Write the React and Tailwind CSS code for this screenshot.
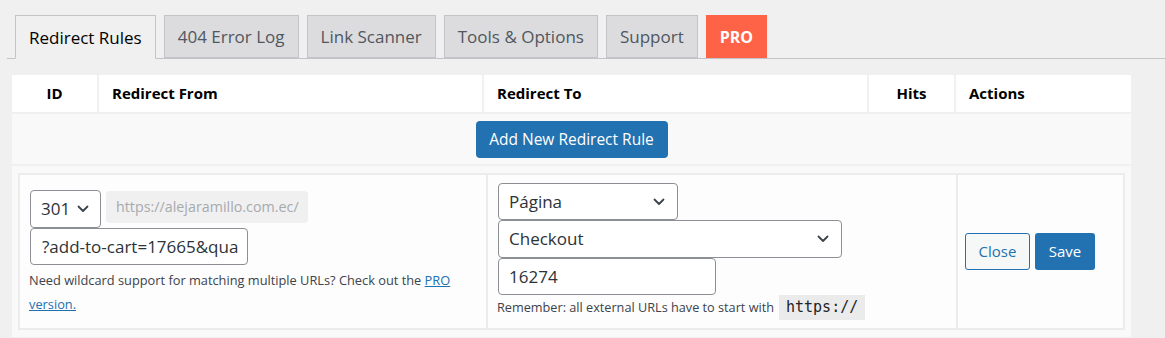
import React from "react";

const Chevron = ({ className = "" }) => (
  <svg className={className} width="12" height="8" viewBox="0 0 12 8" fill="none">
    <path d="M1.5 1.5 L6 6 L10.5 1.5" stroke="#3c434a" strokeWidth="1.8" strokeLinecap="round" strokeLinejoin="round" />
  </svg>
);

const tabBase = "h-[43px] px-[13px] flex items-center border border-[#c3c4c7] text-[17px] leading-none";

export default function App() {
  return (
    <div className="w-[1165px] h-[338px] bg-[#f0f0f1] overflow-hidden text-[#1d2327]" style={{ fontFamily: '"Open Sans", "Noto Sans", sans-serif' }}>
      {/* Tabs */}
      <div className="pt-[15px] ml-[7px] pl-[8px] border-b border-[#c3c4c7] flex gap-[8px] h-[59px]">
        <div className={`${tabBase} bg-[#f0f0f1] border-b-[#f0f0f1] text-[#000] h-[44px]`}>Redirect Rules</div>
        <div className={`${tabBase} bg-[#dcdcde] text-[#50575e]`}>404 Error Log</div>
        <div className={`${tabBase} bg-[#dcdcde] text-[#50575e]`}>Link Scanner</div>
        <div className={`${tabBase} bg-[#dcdcde] text-[#50575e]`}>Tools &amp; Options</div>
        <div className={`${tabBase} bg-[#dcdcde] text-[#50575e]`}>Support</div>
        <div className="h-[43px] px-[13px] flex items-center border border-[#ff6347] bg-[#ff6347] text-white font-bold text-[16px] leading-none">PRO</div>
      </div>

      {/* Table */}
      <div className="mt-[16px] ml-[12px] w-[1119px] flex flex-col gap-[2px]">
        <div className="grid grid-cols-[85px_383px_383px_85px_175px] gap-x-[2px] h-[37px] text-[15px] font-bold text-black">
          <div className="bg-white flex items-center justify-center">ID</div>
          <div className="bg-white flex items-center pl-[13px]">Redirect From</div>
          <div className="bg-white flex items-center pl-[13px]">Redirect To</div>
          <div className="bg-white flex items-center justify-center">Hits</div>
          <div className="bg-white flex items-center pl-[13px]">Actions</div>
        </div>

        <div className="bg-[#f9f9f9] h-[50px] flex items-start justify-center pt-[7px]">
          <button className="h-[37px] w-[192px] rounded-[4px] bg-[#2271b1] text-white text-[15.5px]">Add New Redirect Rule</button>
        </div>

        <div className="bg-[#f9f9f9] h-[171px] px-[6px] pt-[7px]">
          <div className="h-[157px] border-[2px] border-[#ececec] bg-[#ececec] grid grid-cols-[466px_468px_165px] gap-x-[2px]">
            {/* From */}
            <div className="bg-[#fdfdfd] flex flex-col justify-center pl-[10px] pr-[10px] pt-[2px]">
              <div className="flex items-start gap-[5px]">
                <div className="w-[71px] h-[38px] border border-[#8c8f94] rounded-[4px] bg-white flex items-center justify-between pl-[10px] pr-[11px] text-[17px] text-[#2c3338]">
                  <span>301</span>
                  <Chevron />
                </div>
                <div className="w-[202px] h-[32px] mt-[1px] rounded-[4px] bg-[#f0f0f1] flex items-center pl-[10px] text-[14.3px] text-[#a7aaad]">https://alejaramillo.com.ec/</div>
              </div>
              <input
                readOnly
                value="?add-to-cart=17665&quantity=1"
                className="w-[218px] h-[37px] border border-[#8c8f94] rounded-[4px] bg-white pl-[11px] pr-[8px] text-[17px] text-[#2c3338] outline-none"
                style={{ fontFamily: '"Open Sans", "Noto Sans", sans-serif' }}
              />
              <p className="mt-[3px] text-[12.8px] leading-[24px] text-[#3c434a] -ml-[1px]">
                Need wildcard support for matching multiple URLs? Check out the <a className="text-[#2271b1] underline">PRO version.</a>
              </p>
            </div>

            {/* To */}
            <div className="bg-[#fdfdfd] flex flex-col justify-center pl-[10px]">
              <div className="w-[180px] h-[37px] border border-[#8c8f94] rounded-[4px] bg-white flex items-center justify-between pl-[10px] pr-[12px] text-[17px] text-[#2c3338]">
                <span>Página</span>
                <Chevron />
              </div>
              <div className="w-[344px] h-[38px] border border-[#8c8f94] rounded-[4px] bg-white flex items-center justify-between pl-[10px] pr-[12px] text-[17px] text-[#2c3338]">
                <span>Checkout</span>
                <Chevron />
              </div>
              <div className="w-[218px] h-[37px] border border-[#8c8f94] rounded-[4px] bg-white flex items-center pl-[10px] text-[17px] text-[#2c3338]">16274</div>
              <div className="flex items-center text-[12.7px] text-[#3c434a] -ml-[1px]">
                <span>Remember: all external URLs have to start with</span>
                <code className="ml-[5px] h-[25px] px-[7px] flex items-center bg-[#ebebeb] text-[#1d2327] text-[15px]" style={{ fontFamily: '"DejaVu Sans Mono", "Liberation Mono", monospace' }}>https://</code>
              </div>
            </div>

            {/* Actions */}
            <div className="bg-[#fdfdfd] flex items-center pl-[7px] gap-[5px]">
              <button className="w-[65px] h-[37px] border border-[#2271b1] rounded-[3px] bg-[#f6f7f7] text-[#2271b1] text-[15px]">Close</button>
              <button className="w-[60px] h-[37px] rounded-[3px] bg-[#2271b1] text-white text-[15px]">Save</button>
            </div>
          </div>
        </div>
      </div>
    </div>
  );
}
